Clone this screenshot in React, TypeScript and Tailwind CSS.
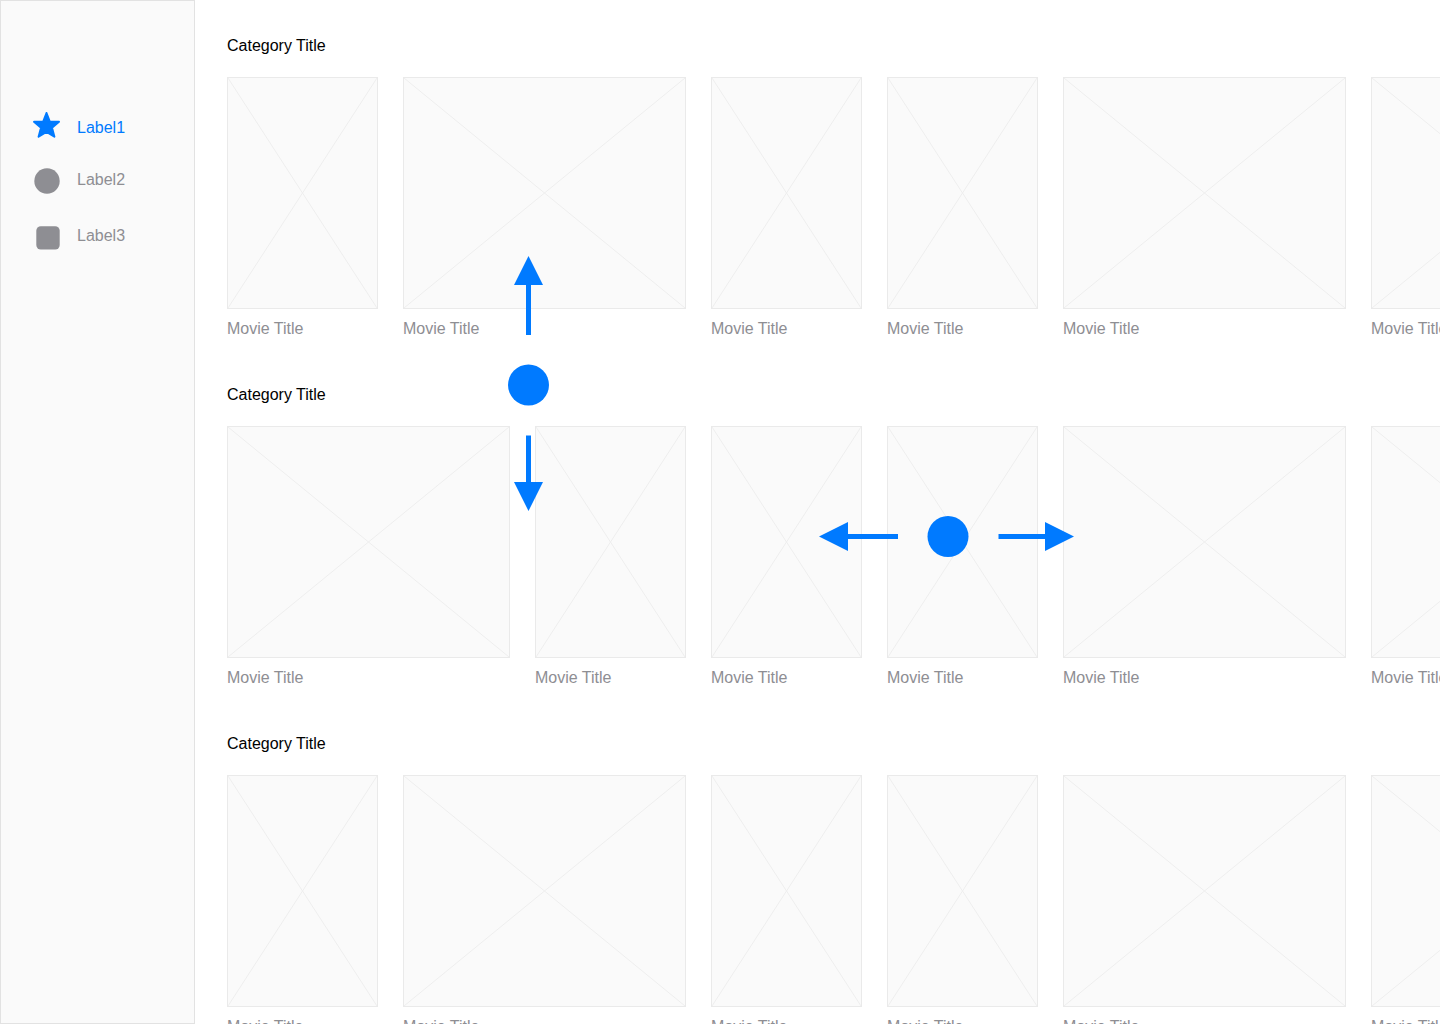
import type { ReactNode } from "react";

type CardSize = "narrow" | "wide";

const sizeClass: Record<CardSize, string> = {
  narrow: "w-[151px]",
  wide: "w-[283px]",
};

const rows: CardSize[][] = [
  ["narrow", "wide", "narrow", "narrow", "wide", "wide"],
  ["wide", "narrow", "narrow", "narrow", "wide", "wide"],
  ["narrow", "wide", "narrow", "narrow", "wide", "wide"],
];

function NavIcon({ children }: { children: ReactNode }) {
  return (
    <svg className="h-8 w-7 shrink-0" viewBox="0 1 28 32" fill="currentColor" aria-hidden="true">
      {children}
    </svg>
  );
}

function Sidebar() {
  return (
    <aside className="w-[195px] shrink-0 border border-[#e2e2e2] bg-[#fafafa] pl-8 pt-[111px]">
      <nav className="flex flex-col items-start text-base text-[#8e8e93]">
        <a href="#label1" aria-current="page" className="mb-5 flex items-center gap-4 text-[#007aff]">
          <NavIcon>
            <path
              d="M13.5 2 L16.8 10.5 L26 10.8 L19 16.7 L21.4 25.7 L13.5 21 L5.6 25.7 L8 16.7 L1 10.8 L10.2 10.5 Z"
              stroke="currentColor"
              strokeWidth="2"
              strokeLinejoin="round"
            />
          </NavIcon>
          Label1
        </a>
        <a href="#label2" className="mb-6 flex items-center gap-4">
          <NavIcon>
            <circle cx="14" cy="18" r="12.7" />
          </NavIcon>
          Label2
        </a>
        <a href="#label3" className="flex items-center gap-4">
          <NavIcon>
            <rect x="3.3" y="7.2" width="23.4" height="23.4" rx="4.5" />
          </NavIcon>
          Label3
        </a>
      </nav>
    </aside>
  );
}

function MovieCard({ size }: { size: CardSize }) {
  return (
    <li className="shrink-0">
      <div className={`${sizeClass[size]} h-[232px] border border-[#eaeaea] bg-[#fafafa]`}>
        <svg className="h-full w-full" viewBox="0 0 100 100" preserveAspectRatio="none" aria-hidden="true">
          <path d="M0 0 L100 100 M100 0 L0 100" stroke="#eeeeee" vectorEffect="non-scaling-stroke" />
        </svg>
      </div>
      <p className="mt-2 text-base text-[#8e8e93]">Movie Title</p>
    </li>
  );
}

function ScrollArrows() {
  return (
    <>
      <path d="M0 20.5 L29 6 V18 H79 V23 H29 V35 Z" />
      <circle cx="129" cy="20.5" r="20.5" />
      <path d="M179.5 18 H226 V6 L255 20.5 L226 35 V23 H179.5 Z" />
    </>
  );
}

export default function App() {
  return (
    <div className="flex h-screen overflow-hidden bg-white font-['Liberation_Sans',Arial,sans-serif]">
      <Sidebar />
      <main className="relative min-w-0 flex-1 overflow-hidden pl-8 pt-[34px]">
        <div className="flex flex-col gap-[42px]">
          {rows.map((cards, row) => (
            <section key={row} className="overflow-hidden">
              <h2 className="mb-[19px] text-base text-black">Category Title</h2>
              <ul className="flex gap-[25px]">
                {cards.map((size, i) => (
                  <MovieCard key={i} size={size} />
                ))}
              </ul>
            </section>
          ))}
        </div>
        <svg
          className="pointer-events-none absolute left-[313px] top-[256px] h-[255px] w-[41px] fill-[#007aff]"
          viewBox="0 0 41 255"
          aria-hidden="true"
        >
          <g transform="translate(41 0) rotate(90)">
            <ScrollArrows />
          </g>
        </svg>
        <svg
          className="pointer-events-none absolute left-[624px] top-[516px] h-[41px] w-[255px] fill-[#007aff]"
          viewBox="0 0 255 41"
          aria-hidden="true"
        >
          <ScrollArrows />
        </svg>
      </main>
    </div>
  );
}
